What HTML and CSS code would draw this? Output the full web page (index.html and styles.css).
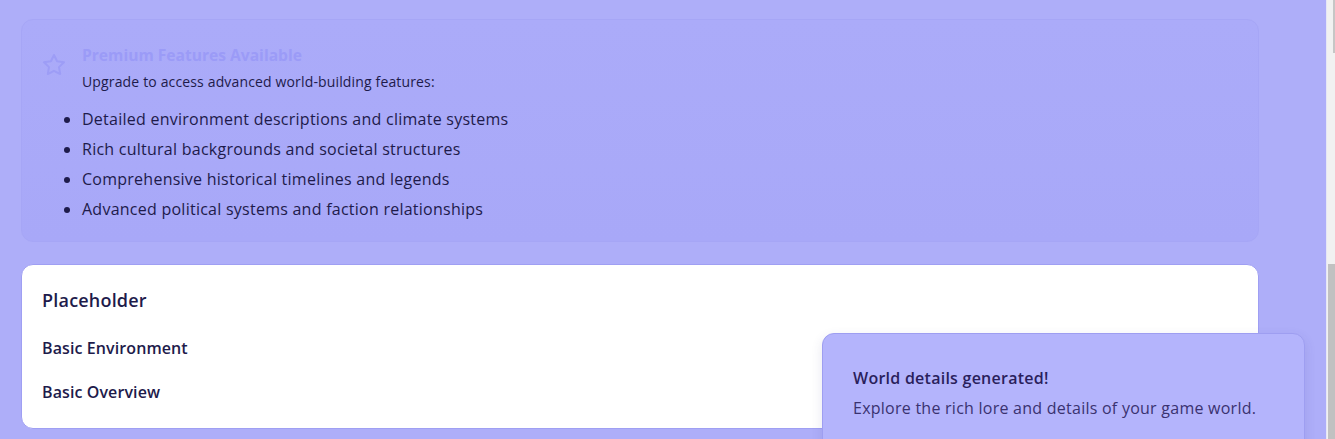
FILE: index.html
```html
<!DOCTYPE html>
<html lang="en">
<head>
<meta charset="utf-8">
<title>World details</title>
<link rel="stylesheet" href="styles.css">
</head>
<body>
<main class="page">
  <section class="premium">
    <svg class="star" viewBox="0 0 24 24" width="24" height="24" fill="none" stroke="currentColor" stroke-width="2" stroke-linecap="round" stroke-linejoin="round"><polygon points="12 2 15.09 8.26 22 9.27 17 14.14 18.18 21.02 12 17.77 5.82 21.02 7 14.14 2 9.27 8.91 8.26 12 2"/></svg>
    <div class="premium-body">
      <h3 class="premium-title">Premium Features Available</h3>
      <p class="premium-sub">Upgrade to access advanced world-building features:</p>
      <ul class="premium-list">
        <li>Detailed environment descriptions and climate systems</li>
        <li>Rich cultural backgrounds and societal structures</li>
        <li>Comprehensive historical timelines and legends</li>
        <li>Advanced political systems and faction relationships</li>
      </ul>
    </div>
  </section>
  <section class="card">
    <h2 class="card-title">Placeholder</h2>
    <h4 class="card-item">Basic Environment</h4>
    <h4 class="card-item">Basic Overview</h4>
  </section>
</main>
<div class="toast">
  <p class="toast-title">World details generated!</p>
  <p class="toast-desc">Explore the rich lore and details of your game world.</p>
</div>
<div class="scrollbar"><div class="thumb-top"></div><div class="thumb"></div></div>
</body>
</html>
```
FILE: styles.css
```css
html, body {
  margin: 0;
  padding: 0;
  height: 439px;
  overflow: hidden;
}
body {
  background: #aeaef9;
  font-family: "Open Sans", "Noto Sans", sans-serif;
  color: #1e1b4b;
}
.page {
  width: 1238px;
  padding: 19px 0 0 21px;
  display: flex;
  flex-direction: column;
  gap: 22px;
}
.premium {
  display: flex;
  align-items: flex-start;
  gap: 16px;
  padding: 23px 20px 20px 20px;
  border: 1px solid #a6a6f6;
  border-radius: 12px;
  background: linear-gradient(#ababf9, #a8a8f8);
}
.star {
  color: #9d9df6;
  margin-top: 10px;
  flex: none;
}
.premium-body {
  flex: 1;
}
.premium-title {
  margin: 0;
  font-size: 15.6px;
  line-height: 24px;
  font-weight: 700;
  color: #9b9bf7;
}
.premium-sub {
  margin: 5px 0 0;
  font-size: 14px;
  line-height: 20px;
  letter-spacing: 0.15px;
  color: #1e1b4b;
}
.premium-list {
  margin: 15px 0 0;
  padding: 0;
  font-size: 16px;
  line-height: 24px;
  letter-spacing: 0.25px;
  display: flex;
  flex-direction: column;
  gap: 6px;
}
.card {
  background: #ffffff;
  border: 1px solid #9f9ff3;
  border-radius: 12px;
  padding: 21px 20px 24px;
  display: flex;
  flex-direction: column;
}
.card-title {
  margin: 0 0 22px;
  font-size: 18px;
  line-height: 28px;
  letter-spacing: 0.2px;
  font-weight: 600;
}
.card-item {
  margin: 0 0 20px;
  font-size: 16px;
  line-height: 24px;
  letter-spacing: 0.1px;
  font-weight: 600;
}
.card-item:last-child {
  margin-bottom: 0;
}
.toast {
  position: absolute;
  left: 822px;
  top: 333px;
  width: 421px;
  padding: 32px 30px;
  background: #b4b4fc;
  border: 1px solid #9e9ef1;
  border-radius: 12px;
  box-shadow: 0 4px 12px rgba(60, 60, 120, 0.12);
}
.toast-title {
  margin: 0;
  font-size: 16px;
  line-height: 24px;
  letter-spacing: 0.25px;
  font-weight: 600;
  color: #2a1f5c;
}
.toast-desc {
  margin: 6px 0 0;
  font-size: 16px;
  line-height: 24px;
  letter-spacing: 0.25px;
  color: #3a3270;
}
.scrollbar {
  position: absolute;
  top: 0;
  right: 0;
  width: 8px;
  height: 439px;
  background: #f1f1f1;
  border-left: 1px solid #e6e6f6;
}
.thumb-top {
  position: absolute;
  top: 0;
  right: 0;
  width: 2px;
  height: 53px;
  background: #c6c6c6;
}
.thumb {
  position: absolute;
  top: 264px;
  right: 0;
  width: 7px;
  height: 175px;
  background: #c1c1c1;
}
```
